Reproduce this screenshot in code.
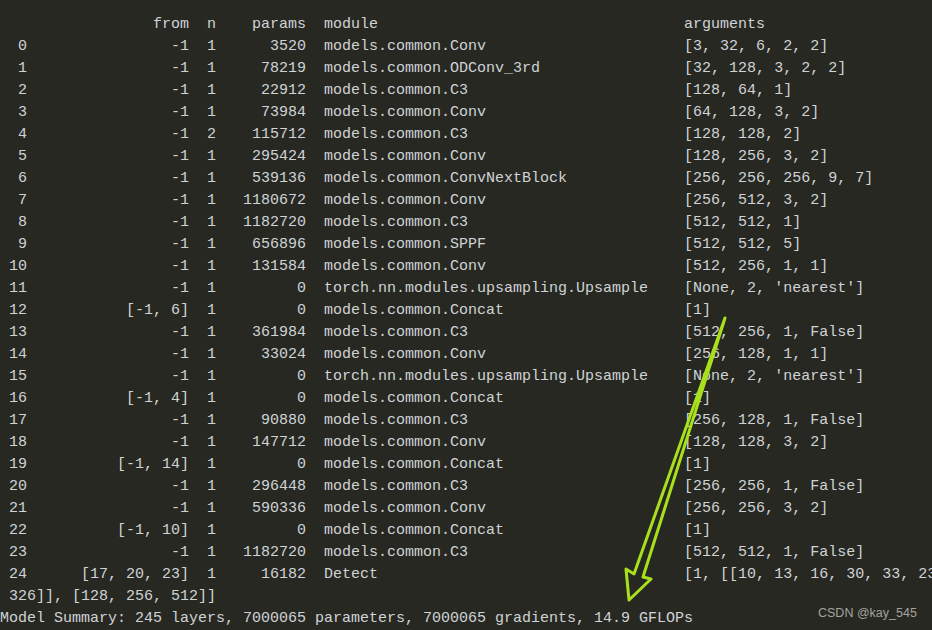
const rows: [number, string, number, number, string, string][] = [
  [0, "-1", 1, 3520, "models.common.Conv", "[3, 32, 6, 2, 2]"],
  [1, "-1", 1, 78219, "models.common.ODConv_3rd", "[32, 128, 3, 2, 2]"],
  [2, "-1", 1, 22912, "models.common.C3", "[128, 64, 1]"],
  [3, "-1", 1, 73984, "models.common.Conv", "[64, 128, 3, 2]"],
  [4, "-1", 2, 115712, "models.common.C3", "[128, 128, 2]"],
  [5, "-1", 1, 295424, "models.common.Conv", "[128, 256, 3, 2]"],
  [6, "-1", 1, 539136, "models.common.ConvNextBlock", "[256, 256, 256, 9, 7]"],
  [7, "-1", 1, 1180672, "models.common.Conv", "[256, 512, 3, 2]"],
  [8, "-1", 1, 1182720, "models.common.C3", "[512, 512, 1]"],
  [9, "-1", 1, 656896, "models.common.SPPF", "[512, 512, 5]"],
  [10, "-1", 1, 131584, "models.common.Conv", "[512, 256, 1, 1]"],
  [11, "-1", 1, 0, "torch.nn.modules.upsampling.Upsample", "[None, 2, 'nearest']"],
  [12, "[-1, 6]", 1, 0, "models.common.Concat", "[1]"],
  [13, "-1", 1, 361984, "models.common.C3", "[512, 256, 1, False]"],
  [14, "-1", 1, 33024, "models.common.Conv", "[256, 128, 1, 1]"],
  [15, "-1", 1, 0, "torch.nn.modules.upsampling.Upsample", "[None, 2, 'nearest']"],
  [16, "[-1, 4]", 1, 0, "models.common.Concat", "[1]"],
  [17, "-1", 1, 90880, "models.common.C3", "[256, 128, 1, False]"],
  [18, "-1", 1, 147712, "models.common.Conv", "[128, 128, 3, 2]"],
  [19, "[-1, 14]", 1, 0, "models.common.Concat", "[1]"],
  [20, "-1", 1, 296448, "models.common.C3", "[256, 256, 1, False]"],
  [21, "-1", 1, 590336, "models.common.Conv", "[256, 256, 3, 2]"],
  [22, "[-1, 10]", 1, 0, "models.common.Concat", "[1]"],
  [23, "-1", 1, 1182720, "models.common.C3", "[512, 512, 1, False]"],
  [
    24,
    "[17, 20, 23]",
    1,
    16182,
    "Detect",
    "[1, [[10, 13, 16, 30, 33, 23, 30, 61, 62, 45, 59, 119, 116, 90, 156, 198, 373,",
  ],
];

// same layout as yolov5's parse_model log
const header =
  "   " +
  "from".padStart(18) +
  "n".padStart(3) +
  "params".padStart(10) +
  "  " +
  "module".padEnd(40) +
  "arguments";

const lines = [
  header,
  ...rows.map(
    ([i, f, n, p, m, a]) =>
      String(i).padStart(3) +
      f.padStart(18) +
      String(n).padStart(3) +
      String(p).padStart(10) +
      "  " +
      m.padEnd(40) +
      a
  ),
  " 326]], [128, 256, 512]]",
  "Model Summary: 245 layers, 7000065 parameters, 7000065 gradients, 14.9 GFLOPs",
];

export default function App() {
  return (
    <div className="relative w-[932px] h-[630px] overflow-hidden bg-[#272822]">
      <div className="pt-[14px] font-['Liberation_Mono','DejaVu_Sans_Mono',monospace] text-[15px] leading-[22px] text-[#cfd3d6] whitespace-pre">
        {lines.map((l, i) => (
          <div key={i}>{l}</div>
        ))}
      </div>

      <svg
        className="absolute inset-0 pointer-events-none"
        width="932"
        height="630"
        viewBox="0 0 932 630"
      >
        <path
          d="M725 318 L643 577 L651 579 L629 600 L626 569 L634 574 Z"
          fill="none"
          stroke="#a9e01c"
          strokeWidth="3"
          strokeLinejoin="round"
        />
      </svg>

      <span className="absolute left-[818px] top-[604px] font-['Liberation_Sans',Arial,sans-serif] text-[12.5px] text-[#a3a39e]">
        CSDN @kay_545
      </span>
    </div>
  );
}
